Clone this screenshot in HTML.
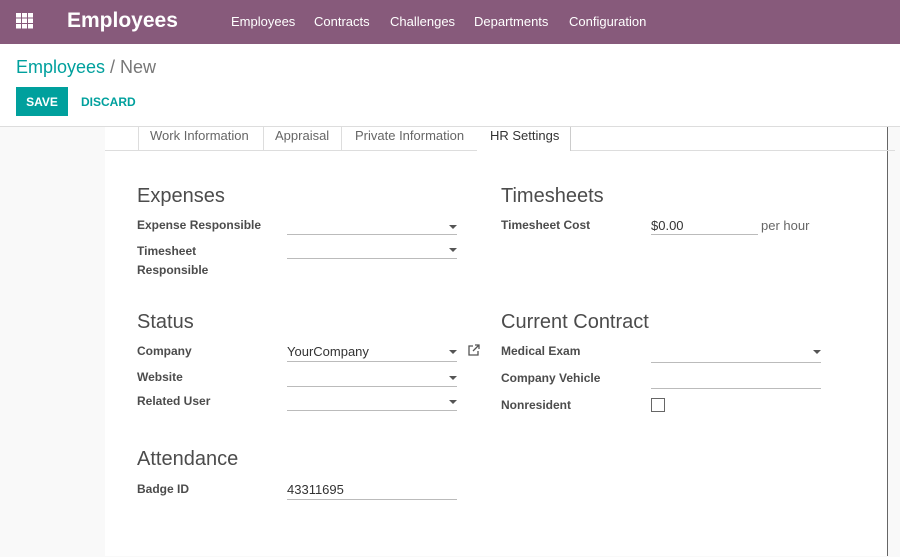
<!DOCTYPE html>
<html><head><style>
body{margin:0;width:900px;height:556px;overflow:hidden;font-family:"Liberation Sans",sans-serif;background:#fff;position:relative;color:#4c4c4c}
.a{position:absolute;white-space:nowrap}
.top{position:absolute;left:0;top:0;width:900px;height:44px;background:#875A7B}
.nav{color:#fff;font-size:13px;top:14px}
.lab{font-weight:bold;font-size:12px;color:#4c4c4c;top:0}
.h{font-size:20px;color:#4c4c4c}
.ln{position:absolute;height:1px;background:#bbb}
.dd{position:absolute;width:0;height:0;border-left:4px solid transparent;border-right:4px solid transparent;border-top:4px solid #555}
.v{font-size:13px;color:#333}
</style></head><body>
<div class="top"></div>
<svg class="a" style="left:16px;top:13px" width="18" height="16"><g fill="#fff"><rect x="0" y="0" width="5" height="4.5"/><rect x="6" y="0" width="5" height="4.5"/><rect x="12" y="0" width="5" height="4.5"/><rect x="0" y="5.5" width="5" height="4.5"/><rect x="6" y="5.5" width="5" height="4.5"/><rect x="12" y="5.5" width="5" height="4.5"/><rect x="0" y="11" width="5" height="4.5"/><rect x="6" y="11" width="5" height="4.5"/><rect x="12" y="11" width="5" height="4.5"/></g></svg>
<div class="a" style="left:67px;top:9px;font-size:21px;font-weight:bold;color:#fff">Employees</div>
<div class="a nav" style="left:231px">Employees</div>
<div class="a nav" style="left:314px">Contracts</div>
<div class="a nav" style="left:390px">Challenges</div>
<div class="a nav" style="left:474px">Departments</div>
<div class="a nav" style="left:569px">Configuration</div>
<div class="a" style="left:16px;top:57px;font-size:18px;color:#00A09D">Employees <span style="color:#777">/ New</span></div>
<div class="a" style="left:16px;top:87px;width:52px;height:29px;background:#00A09D;color:#fff;font-weight:bold;font-size:12px;line-height:30px;text-align:center">SAVE</div>
<div class="a" style="left:81px;top:95px;color:#00A09D;font-weight:bold;font-size:12px">DISCARD</div>
<div class="a" style="left:0;top:126px;width:900px;height:430px;background:#f9f9f9;border-top:1px solid #ddd"></div>
<div class="a" style="left:105px;top:127px;width:782px;height:429px;background:#fff;border-right:1px solid #666"></div>
<div class="ln" style="left:105px;top:150px;width:790px;background:#ddd"></div>
<div class="a" style="left:138px;top:127px;width:124px;height:23px;border-left:1px solid #ddd;border-right:1px solid #ddd"></div>
<div class="a" style="left:341px;top:127px;width:136px;height:23px;border-left:1px solid #ddd;border-right:1px solid #ddd"></div>
<div class="a" style="left:477px;top:127px;width:93px;height:24px;background:#fff;border-right:1px solid #ccc"></div>
<div class="a" style="left:150px;top:128px;font-size:13px;color:#666">Work Information</div>
<div class="a" style="left:275px;top:128px;font-size:13px;color:#666">Appraisal</div>
<div class="a" style="left:355px;top:128px;font-size:13px;color:#666">Private Information</div>
<div class="a" style="left:490px;top:128px;font-size:13px;color:#333">HR Settings</div>

<div class="a h" style="left:137px;top:185px">Expenses</div>
<div class="a lab" style="left:137px;top:218px">Expense Responsible</div>
<div class="ln" style="left:287px;top:234px;width:170px"></div><div class="dd" style="left:449px;top:225px"></div>
<div class="a lab" style="left:137px;top:242px;line-height:19px">Timesheet<br>Responsible</div>
<div class="ln" style="left:287px;top:258px;width:170px"></div><div class="dd" style="left:449px;top:248px"></div>

<div class="a h" style="left:501px;top:185px">Timesheets</div>
<div class="a lab" style="left:501px;top:218px">Timesheet Cost</div>
<div class="a v" style="left:651px;top:218px">$0.00</div>
<div class="ln" style="left:651px;top:234px;width:107px"></div>
<div class="a" style="left:761px;top:218px;font-size:13px;color:#666">per hour</div>

<div class="a h" style="left:137px;top:311px">Status</div>
<div class="a lab" style="left:137px;top:344px">Company</div>
<div class="a v" style="left:287px;top:344px">YourCompany</div>
<div class="ln" style="left:287px;top:361px;width:170px"></div><div class="dd" style="left:449px;top:350px"></div>
<svg class="a" style="left:467px;top:343px" width="14" height="14" fill="none" stroke="#555" stroke-width="1.3"><path d="M6 3H2v9h9V8M8 2h4v4M12 2L6 8"/></svg>
<div class="a lab" style="left:137px;top:370px">Website</div>
<div class="ln" style="left:287px;top:386px;width:170px"></div><div class="dd" style="left:449px;top:376px"></div>
<div class="a lab" style="left:137px;top:394px">Related User</div>
<div class="ln" style="left:287px;top:410px;width:170px"></div><div class="dd" style="left:449px;top:400px"></div>

<div class="a h" style="left:501px;top:311px">Current Contract</div>
<div class="a lab" style="left:501px;top:344px">Medical Exam</div>
<div class="ln" style="left:651px;top:362px;width:170px"></div><div class="dd" style="left:813px;top:350px"></div>
<div class="a lab" style="left:501px;top:371px">Company Vehicle</div>
<div class="ln" style="left:651px;top:388px;width:170px"></div>
<div class="a lab" style="left:501px;top:398px">Nonresident</div>
<div class="a" style="left:651px;top:398px;width:12px;height:12px;border:1px solid #666"></div>

<div class="a h" style="left:137px;top:448px">Attendance</div>
<div class="a lab" style="left:137px;top:482px">Badge ID</div>
<div class="a v" style="left:287px;top:482px">43311695</div>
<div class="ln" style="left:287px;top:499px;width:170px"></div>
</body></html>
